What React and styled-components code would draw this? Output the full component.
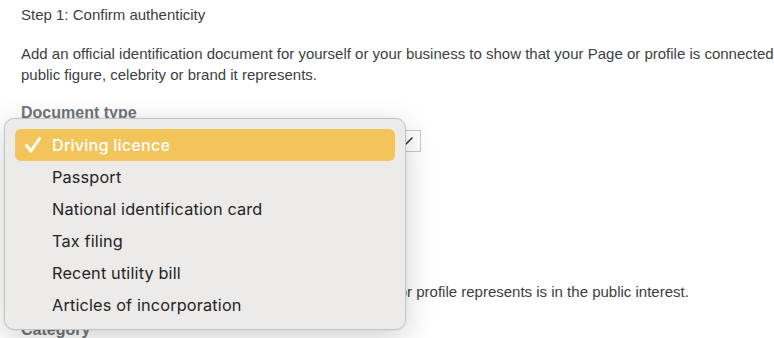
import React from "react";
import styled, { createGlobalStyle } from "styled-components";

const Global = createGlobalStyle`
  html, body { margin: 0; padding: 0; background: #fff; overflow: hidden; }
  body { font-family: "Liberation Sans", Arial, sans-serif; }
`;

const Page = styled.div`
  position: relative;
  width: 774px;
  height: 338px;
  overflow: hidden;
  background: #fff;
`;

const Content = styled.div`
  width: 840px;
  padding: 4px 0 0 21px;
  color: #3d3e40;
  font-size: 15px;
  line-height: 21px;
`;

const Step = styled.div`
  margin: 0 0 18px;
`;

const Para = styled.p`
  margin: 0 0 19px;
  width: 795px;
`;

const Label = styled.div`
  font-weight: bold;
  color: #707378;
  font-size: 16px;
  line-height: 18px;
  margin-bottom: 8px;
`;

const SelectBox = styled.div`
  width: 400px;
  height: 22px;
  border: 1px solid #c9c9c9;
  box-sizing: border-box;
  display: flex;
  justify-content: flex-end;
  align-items: center;
  padding-right: 6px;
  margin-bottom: 90px;
`;

const Menu = styled.div`
  position: absolute;
  left: 4px;
  top: 118px;
  width: 402px;
  height: 212px;
  box-sizing: border-box;
  padding: 10px 10px;
  background: #ecebea;
  border: 1px solid #c4c4c4;
  border-radius: 10px;
  box-shadow: 0 8px 30px rgba(0, 0, 0, 0.18), 0 0 2px rgba(0, 0, 0, 0.08);
  font-family: Inter, "Noto Sans", sans-serif;
`;

const Item = styled.div`
  display: flex;
  align-items: center;
  height: 32px;
  box-sizing: border-box;
  padding-left: 9px;
  border-radius: 6px;
  font-size: 16.3px;
  letter-spacing: 0.15px;
  color: ${(p) => (p.$active ? "#fff" : "#232323")};
  background: ${(p) => (p.$active ? "#f2c45a" : "transparent")};
  font-weight: ${(p) => (p.$active ? 500 : 400)};
`;

const CheckSlot = styled.span`
  width: 28px;
  display: flex;
  align-items: center;
`;

const items = [
  "Driving licence",
  "Passport",
  "National identification card",
  "Tax filing",
  "Recent utility bill",
  "Articles of incorporation",
];

export default function App() {
  return (
    <Page>
      <Global />
      <Content>
        <Step>Step 1: Confirm authenticity</Step>
        <Para>
          Add an official identification document for yourself or your business to show that your Page or profile is connected to the
          public figure, celebrity or brand it represents.
        </Para>
        <Label>Document type</Label>
        <SelectBox>
          <svg width="10" height="10" viewBox="0 0 10 10">
            <path d="M2 8 L8 2" stroke="#333" strokeWidth="1.6" strokeLinecap="round" fill="none" />
          </svg>
        </SelectBox>
        <Step>Step 2: Confirm notability</Step>
        <Para>
          Show that the public figure, celebrity or brand your Page or profile represents is in the public interest.
        </Para>
        <Label>Category</Label>
      </Content>
      <Menu>
        {items.map((t, i) => (
          <Item key={t} $active={i === 0}>
            <CheckSlot>
              {i === 0 && (
                <svg width="18" height="18" viewBox="0 0 18 18">
                  <path d="M2.5 9.5 L7 15 L15.5 2.5" stroke="#fff" strokeWidth="3" strokeLinecap="round" strokeLinejoin="round" fill="none" />
                </svg>
              )}
            </CheckSlot>
            {t}
          </Item>
        ))}
      </Menu>
    </Page>
  );
}
